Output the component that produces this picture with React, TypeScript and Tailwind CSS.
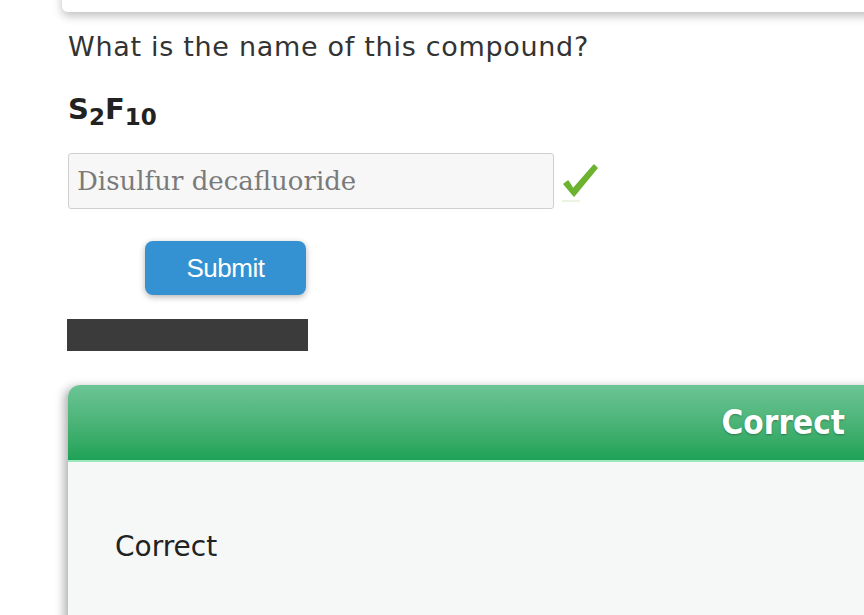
export default function App() {
  return (
    <div className="relative h-[615px] w-[864px] overflow-hidden bg-white" style={{ fontFamily: '"DejaVu Sans", Verdana, sans-serif' }}>
      {/* top card edge */}
      <div className="absolute left-[62px] top-[-40px] h-[52px] w-[900px] rounded-b-md bg-white shadow-[0_4px_10px_rgba(0,0,0,0.25)]" />

      <div className="pl-[68px] pt-[30px]">
        <p className="text-[27px] leading-[33px] tracking-[0.7px] text-[#333]">What is the name of this compound?</p>

        <p className="mt-[29px] text-[29px] font-bold leading-[34px] text-[#222]">
          S<sub className="text-[23px] leading-none">2</sub>F<sub className="text-[23px] leading-none">10</sub>
        </p>

        <div className="mt-[27px] flex items-center gap-[8px]">
          <div
            className="flex h-[56px] w-[486px] items-center rounded-[3px] border border-[#cfcfcf] bg-[#f7f7f7] px-[8px] text-[26px] text-[#7a7a7a]"
            style={{ fontFamily: '"DejaVu Serif", "Liberation Serif", serif' }}
          >
            Disulfur decafluoride
          </div>
          <svg width="36" height="40" viewBox="0 0 36 40" className="mt-[2px]">
            <path d="M2 22 L6 19 L11 27 L32 3 L35 6 L12 34 Z" fill="#6db32f" stroke="#6db32f" strokeWidth="1.5" strokeLinejoin="round" />
            <line x1="0" y1="39" x2="18" y2="39" stroke="#e3f0d6" strokeWidth="1.5" />
          </svg>
        </div>

        <button
          className="ml-[77px] mt-[32px] flex h-[54px] w-[161px] items-center justify-center rounded-[8px] bg-[#3592d2] text-[26px] tracking-[-0.5px] text-white shadow-[0_2px_6px_rgba(0,0,0,0.3)]"
          style={{ fontFamily: '"Liberation Sans", Arial, sans-serif' }}
        >
          Submit
        </button>

        <div className="-ml-px mt-[24px] h-[32px] w-[241px] bg-[#3b3b3b]" />

        <div className="mt-[34px] w-[820px] overflow-hidden rounded-tl-[12px] shadow-[-4px_2px_10px_rgba(0,0,0,0.3)]">
          <div className="flex h-[77px] items-center justify-end border-b-2 border-[#9ee8bd] bg-gradient-to-b from-[#6cc596] to-[#1ca257] pr-[43px]">
            <span
              className="text-[33px] font-bold text-white [text-shadow:0_1px_2px_rgba(0,0,0,0.3)]"
              style={{ fontFamily: '"DejaVu Sans Condensed", "DejaVu Sans", sans-serif' }}
            >
              Correct
            </span>
          </div>
          <div className="h-[160px] bg-[#f6f7f7] pl-[47px] pt-[68px] text-[28px] leading-[34px] text-[#222]">Correct</div>
        </div>
      </div>
    </div>
  );
}
